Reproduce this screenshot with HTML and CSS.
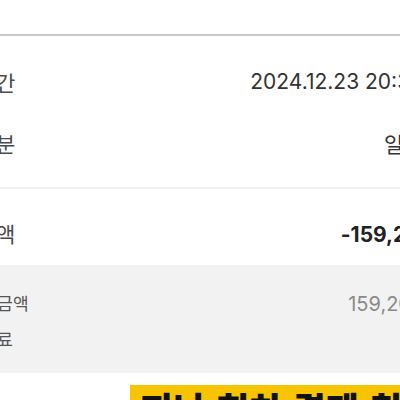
FILE: index.html
```html
<!DOCTYPE html>
<html lang="ko">
<head>
<meta charset="utf-8">
<link rel="stylesheet" href="styles.css">
</head>
<body>
<div class="sheet">
  <div class="topbar"></div>
  <section class="group first">
    <div class="row"><span class="label">결제시간</span><span class="value date">2024.12.23 20:35:11</span></div>
    <div class="row"><span class="label">할부구분</span><span class="value">일시불</span></div>
  </section>
  <div class="divider"></div>
  <section class="group second">
    <div class="row"><span class="label">결제금액</span><span class="value strong">-159,200원</span></div>
  </section>
  <section class="detail">
    <div class="drow"><span class="dlabel">취소금액</span><span class="dvalue">159,200원</span></div>
    <div class="drow"><span class="dlabel">수수료</span><span class="dvalue"></span></div>
  </section>
  <div class="banner-wrap">
    <div class="banner">지난 회차 결제 취소 안내</div>
  </div>
</div>
</body>
</html>
```

FILE: styles.css
```css
html, body {
  margin: 0;
  padding: 0;
  background: #ffffff;
  overflow: hidden;
  width: 400px;
  height: 400px;
}

.sheet {
  margin-left: -62px;
  width: 504px;
  font-family: Inter, "Noto Sans CJK KR", sans-serif;
}

.topbar {
  height: 34px;
  border-bottom: 2px solid #c9c9c9;
}

.group.first {
  padding: 15px 0 14px;
}

.group.second {
  padding: 13px 0 2px;
}

.row {
  height: 61px;
  display: flex;
  align-items: center;
  justify-content: space-between;
  font-size: 21px;
}

.label {
  color: #4a4a4a;
  font-family: "Noto Sans CJK KR", sans-serif;
}

.value {
  color: #333333;
  font-size: 21px;
}

.value.date {
  margin-right: -4px;
}

.value.strong {
  font-weight: 700;
  color: #222222;
  margin-right: -12px;
}

.divider {
  height: 2px;
  background: #f1f1f1;
}

.detail {
  background: #f2f2f2;
  padding: 19px 0 17px;
}

.drow {
  height: 36px;
  display: flex;
  align-items: center;
  justify-content: space-between;
  font-size: 17px;
}

.dlabel {
  color: #555555;
  font-family: "Noto Sans CJK KR", sans-serif;
  margin-left: 28px;
}

.dvalue {
  color: #8a8a8a;
  font-size: 20px;
}

.banner-wrap {
  padding: 12px 0 0 192px;
}

.banner {
  background: #f6c400;
  color: #111111;
  font-family: "Noto Sans CJK KR", sans-serif;
  font-weight: 900;
  font-size: 36px;
  line-height: 1.3;
  padding: 0 10px;
  white-space: nowrap;
}
```
